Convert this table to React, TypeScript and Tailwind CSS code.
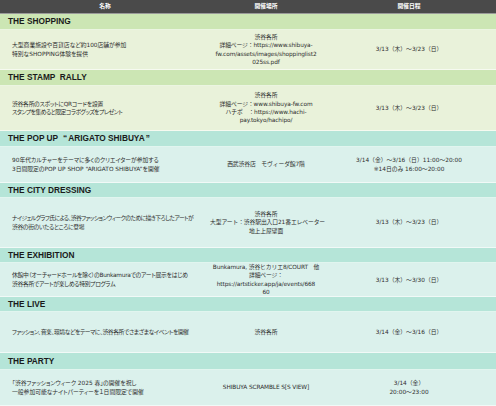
import React from "react";

type Line = { t: string; k?: string };
type Row = {
  title: React.ReactNode;
  theme: "green" | "teal";
  h: string;
  th: string;
  c1: Line[];
  c2: string[];
  c3: string[];
};

const rows: Row[] = [
  {
    title: "THE SHOPPING",
    theme: "green",
    th: "h-[16px]",
    h: "h-[40px]",
    c1: [{ t: "大型商業施設や百貨店など約100店舗が参加" }, { t: "特別なSHOPPING体験を提供" }],
    c2: ["渋谷各所", "詳細ページ：https://www.shibuya-", "fw.com/assets/images/shoppinglist2", "025ss.pdf"],
    c3: ["3/13（木）～3/23（日）"],
  },
  {
    title: "THE STAMP  RALLY",
    theme: "green",
    th: "h-[16px]",
    h: "h-[45px]",
    c1: [
      { t: "渋谷各所のスポットにQRコードを設置", k: "tracking-[-0.25px]" },
      { t: "スタンプを集めると限定コラボグッズをプレゼント", k: "tracking-[-0.5px]" },
    ],
    c2: ["渋谷各所", "詳細ページ：www.shibuya-fw.com", "ハチポ　：https://www.hachi-", "pay.tokyo/hachipo/"],
    c3: ["3/13（木）～3/23（日）"],
  },
  {
    title: (
      <>
        THE POP UP
        <span className="ml-[5px] mr-[1px]">“</span>
        ARIGATO SHIBUYA
        <span className="ml-[1px]">”</span>
      </>
    ),
    theme: "teal",
    th: "h-[16px]",
    h: "h-[36px]",
    c1: [
      { t: "90年代カルチャーをテーマに多くのクリエイターが参加する" },
      { t: "3日間限定のPOP UP SHOP “ARIGATO SHIBUYA”を開催" },
    ],
    c2: ["西武渋谷店　モヴィーダ館7階"],
    c3: ["3/14（金）～3/16（日）11:00～20:00", "※14日のみ 16:00～20:00"],
  },
  {
    title: "THE CITY DRESSING",
    theme: "teal",
    th: "h-[15px]",
    h: "h-[50px]",
    c1: [
      { t: "ナイジェルグラフ氏による、渋谷ファッションウィークのために描き下ろしたアートが", k: "tracking-[-0.55px]" },
      { t: "渋谷の街のいたるところに登場", k: "tracking-[-0.35px]" },
    ],
    c2: ["渋谷各所", "大型アート：渋谷駅出入口21番エレベーター", "地上上屋壁面"],
    c3: ["3/13（木）～3/23（日）"],
  },
  {
    title: "THE EXHIBITION",
    theme: "teal",
    th: "h-[15px]",
    h: "h-[34px]",
    c1: [
      { t: "休館中（オーチャードホールを除く）のBunkamuraでのアート展示をはじめ", k: "tracking-[-0.25px]" },
      { t: "渋谷各所でアートが楽しめる特別プログラム", k: "tracking-[-0.3px]" },
    ],
    c2: ["Bunkamura, 渋谷ヒカリエ8/COURT　他", "詳細ページ：", "https://artsticker.app/ja/events/668", "60"],
    c3: ["3/13（木）～3/30（日）"],
  },
  {
    title: "THE LIVE",
    theme: "teal",
    th: "h-[15px]",
    h: "h-[41px]",
    c1: [{ t: "ファッション、音楽、環境などをテーマに、渋谷各所でさまざまなイベントを開催", k: "tracking-[-0.4px]" }],
    c2: ["渋谷各所"],
    c3: ["3/14（金）～3/16（日）"],
  },
  {
    title: "THE PARTY",
    theme: "teal",
    th: "h-[17px]",
    h: "h-[36px]",
    c1: [
      { t: "「渋谷ファッションウィーク 2025 春」の開催を祝し" },
      { t: "一般参加可能なナイトパーティーを１日間限定で開催" },
    ],
    c2: ["SHIBUYA SCRAMBLE S[S VIEW]"],
    c3: ["3/14（金）", "20:00～23:00"],
  },
];

const body =
  "[font-family:'DejaVu_Sans','Noto_Sans_CJK_JP',sans-serif] text-[5.8px] leading-[8.4px] text-[#2e2e2e] whitespace-nowrap";

export default function App() {
  return (
    <div className="w-[496px] h-[406px] overflow-hidden bg-white flex flex-col">
      <div className="h-[14px] shrink-0 bg-[#4a4a4a] border-b border-[#9a9a9a] grid grid-cols-[210px_112px_174px] items-center text-white font-bold text-[5.8px] [font-family:'Noto_Sans_CJK_JP',sans-serif]">
        <div className="text-center">名称</div>
        <div className="text-center">開催場所</div>
        <div className="text-center">開催日程</div>
      </div>
      {rows.map((r, i) => {
        const tbg = r.theme === "green" ? "bg-[#cce6b4]" : "bg-[#b5e5d8]";
        const bbg = r.theme === "green" ? "bg-[#e9f2da]" : "bg-[#dbf1ec]";
        return (
          <React.Fragment key={i}>
            <div
              className={`${r.th} shrink-0 ${tbg} border-b border-white/60 flex items-center pl-2 font-bold text-[8.3px] text-[#1a1a1a] [font-family:'Liberation_Sans','Noto_Sans_CJK_JP',sans-serif] whitespace-pre`}
            >
              {r.title}
            </div>
            <div
              className={`${r.h} shrink-0 ${bbg} border-b border-white/60 grid grid-cols-[210px_112px_174px] items-center ${body}`}
            >
              <div className="pl-3 [font-feature-settings:'palt']">
                {r.c1.map((l, j) => (
                  <div key={j} className={l.k}>
                    {l.t}
                  </div>
                ))}
              </div>
              <div className="text-center tracking-[-0.1px]">
                {r.c2.map((l, j) => (
                  <div key={j}>{l}</div>
                ))}
              </div>
              <div className="text-center">
                {r.c3.map((l, j) => (
                  <div key={j}>{l}</div>
                ))}
              </div>
            </div>
          </React.Fragment>
        );
      })}
    </div>
  );
}
